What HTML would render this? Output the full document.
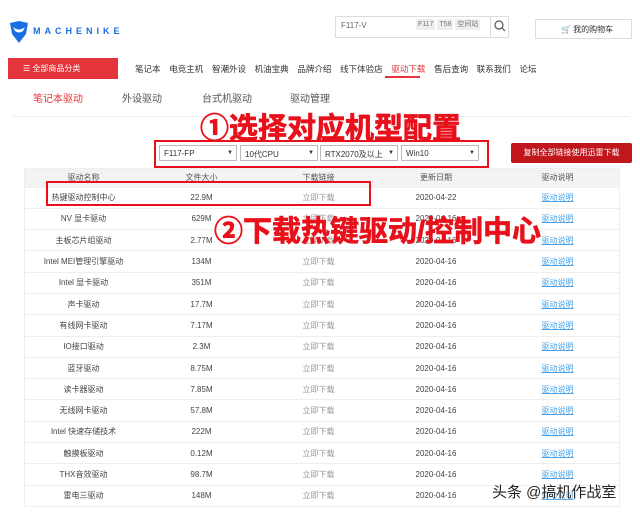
<!DOCTYPE html><html><head><meta charset="utf-8"><style>
*{margin:0;padding:0;box-sizing:border-box}
body{width:640px;height:512px;background:#fff;font-family:"Liberation Sans","Noto Sans CJK SC",sans-serif;position:relative;overflow:hidden;color:#333}
.a{position:absolute;white-space:nowrap}
.f9{font-size:9px}
table{position:absolute;left:24px;top:168px;width:596px;border-collapse:collapse;font-size:8px;color:#444}
td{text-align:center;height:21.3px;border-bottom:1px solid #eee}
tr.h td{background:#f3f3f3;height:19px;color:#555}
td:nth-child(1){width:119px}td:nth-child(2){width:117px}td:nth-child(3){width:117px}td:nth-child(4){width:118px}
.dl{color:#999}.lk{color:#4aa3e8;text-decoration:underline}
.sel{position:absolute;top:145px;height:16px;border:1px solid #bbb;font-size:8px;padding:3px 4px;background:#fff}
.sel:after{content:"▼";position:absolute;right:3px;top:4px;font-size:6px}
.big{position:absolute;color:#e8101a;font-weight:bold;white-space:nowrap;-webkit-text-stroke:0.7px #e8101a}
</style></head><body>
<svg class="a" style="left:9px;top:20px" width="20" height="24" viewBox="0 0 20 24"><path d="M1 3 L10 1 L19 3 L17 14 L10 23 L3 14 Z" fill="#1a6fe0"/><path d="M4 7 Q10 12 16 7 L14 11 Q10 14 6 11 Z" fill="#fff"/></svg>
<div class="a" style="left:33px;top:26px;font-size:9px;letter-spacing:4px;color:#1a6fe0;font-weight:bold">MACHENIKE</div>
<div class="a" style="left:335px;top:16px;width:174px;height:22px;border:1px solid #ddd"></div>
<div class="a f9" style="left:341px;top:21px;color:#666;font-size:8px">F117-V</div>
<div class="a" style="left:416px;top:19px;font-size:7px;color:#777"><span style="background:#eee;padding:2px 2px">F117</span> <span style="background:#eee;padding:2px 2px">T58</span> <span style="background:#eee;padding:2px 2px">空间站</span></div>
<div class="a" style="left:490px;top:16px;width:1px;height:22px;background:#ddd"></div>
<svg class="a" style="left:494px;top:20px" width="12" height="12"><circle cx="5" cy="5" r="4" fill="none" stroke="#555" stroke-width="1.2"/><path d="M8 8 L11 11" stroke="#555" stroke-width="1.2"/></svg>
<div class="a" style="left:535px;top:19px;width:97px;height:20px;border:1px solid #ddd"></div>
<div class="a" style="left:561px;top:24px;font-size:8px;color:#333">🛒 我的购物车</div>
<div class="a" style="left:8px;top:58px;width:110px;height:21px;background:#e3353b"></div>
<div class="a" style="left:23px;top:63px;font-size:8px;color:#fff">☰ 全部商品分类</div>
<div class="a" style="left:135px;top:63px;font-size:8.5px;color:#333;word-spacing:2px">笔记本&nbsp; 电竞主机&nbsp; 智潮外设&nbsp; 机油宝典&nbsp; 品牌介绍&nbsp; 线下体验店&nbsp; <span style="color:#e3353b">驱动下载</span>&nbsp; 售后查询&nbsp; 联系我们&nbsp; 论坛</div>
<div class="a" style="left:385px;top:76px;width:35px;height:2px;background:#e3353b"></div>
<div class="a" style="left:33px;top:90px;font-size:10px;color:#e3353b">笔记本驱动</div>
<div class="a" style="left:122px;top:90px;font-size:10px;color:#555">外设驱动</div>
<div class="a" style="left:202px;top:90px;font-size:10px;color:#555">台式机驱动</div>
<div class="a" style="left:290px;top:90px;font-size:10px;color:#555">驱动管理</div>
<div class="a" style="left:13px;top:116px;width:617px;height:1px;background:#eee"></div>
<div class="big" style="left:200px;top:105px;font-size:29px">①选择对应机型配置</div>
<div class="a" style="left:154px;top:140px;width:335px;height:28px;border:2px solid #e8101a"></div>
<div class="sel" style="left:159px;width:78px">F117-FP</div>
<div class="sel" style="left:240px;width:78px">10代CPU</div>
<div class="sel" style="left:320px;width:78px">RTX2070及以上</div>
<div class="sel" style="left:401px;width:78px">Win10</div>
<div class="a" style="left:511px;top:143px;width:121px;height:20px;background:#c0161c;border-radius:2px;color:#fff;font-size:8px;text-align:center;line-height:20px">复制全部链接使用迅雷下载</div>
<table>
<tr class="h"><td>驱动名称</td><td>文件大小</td><td>下载链接</td><td>更新日期</td><td>驱动说明</td></tr>
<tr><td>热键驱动控制中心</td><td>22.9M</td><td class="dl">立即下载</td><td>2020-04-22</td><td><span class="lk">驱动说明</span></td></tr>
<tr><td>NV 显卡驱动</td><td>629M</td><td class="dl">立即下载</td><td>2020-04-16</td><td><span class="lk">驱动说明</span></td></tr>
<tr><td>主板芯片组驱动</td><td>2.77M</td><td class="dl">立即下载</td><td>2020-04-16</td><td><span class="lk">驱动说明</span></td></tr>
<tr><td>Intel MEI管理引擎驱动</td><td>134M</td><td class="dl">立即下载</td><td>2020-04-16</td><td><span class="lk">驱动说明</span></td></tr>
<tr><td>Intel 显卡驱动</td><td>351M</td><td class="dl">立即下载</td><td>2020-04-16</td><td><span class="lk">驱动说明</span></td></tr>
<tr><td>声卡驱动</td><td>17.7M</td><td class="dl">立即下载</td><td>2020-04-16</td><td><span class="lk">驱动说明</span></td></tr>
<tr><td>有线网卡驱动</td><td>7.17M</td><td class="dl">立即下载</td><td>2020-04-16</td><td><span class="lk">驱动说明</span></td></tr>
<tr><td>IO接口驱动</td><td>2.3M</td><td class="dl">立即下载</td><td>2020-04-16</td><td><span class="lk">驱动说明</span></td></tr>
<tr><td>蓝牙驱动</td><td>8.75M</td><td class="dl">立即下载</td><td>2020-04-16</td><td><span class="lk">驱动说明</span></td></tr>
<tr><td>读卡器驱动</td><td>7.85M</td><td class="dl">立即下载</td><td>2020-04-16</td><td><span class="lk">驱动说明</span></td></tr>
<tr><td>无线网卡驱动</td><td>57.8M</td><td class="dl">立即下载</td><td>2020-04-16</td><td><span class="lk">驱动说明</span></td></tr>
<tr><td>Intel 快速存储技术</td><td>222M</td><td class="dl">立即下载</td><td>2020-04-16</td><td><span class="lk">驱动说明</span></td></tr>
<tr><td>触摸板驱动</td><td>0.12M</td><td class="dl">立即下载</td><td>2020-04-16</td><td><span class="lk">驱动说明</span></td></tr>
<tr><td>THX音效驱动</td><td>98.7M</td><td class="dl">立即下载</td><td>2020-04-16</td><td><span class="lk">驱动说明</span></td></tr>
<tr><td>雷电三驱动</td><td>148M</td><td class="dl">立即下载</td><td>2020-04-16</td><td><span class="lk">驱动说明</span></td></tr>
</table>
<div class="a" style="left:24px;top:168px;width:596px;height:339px;border:1px solid #eee"></div>
<div class="a" style="left:46px;top:181px;width:325px;height:25px;border:2px solid #e8101a"></div>
<div class="big" style="left:214px;top:208px;font-size:29px">②下载热键驱动/控制中心</div>
<div class="a" style="left:492px;top:481px;font-size:15px;color:#222;text-shadow:0 0 2px #fff,0 0 2px #fff">头条 @搞机作战室</div>
</body></html>
